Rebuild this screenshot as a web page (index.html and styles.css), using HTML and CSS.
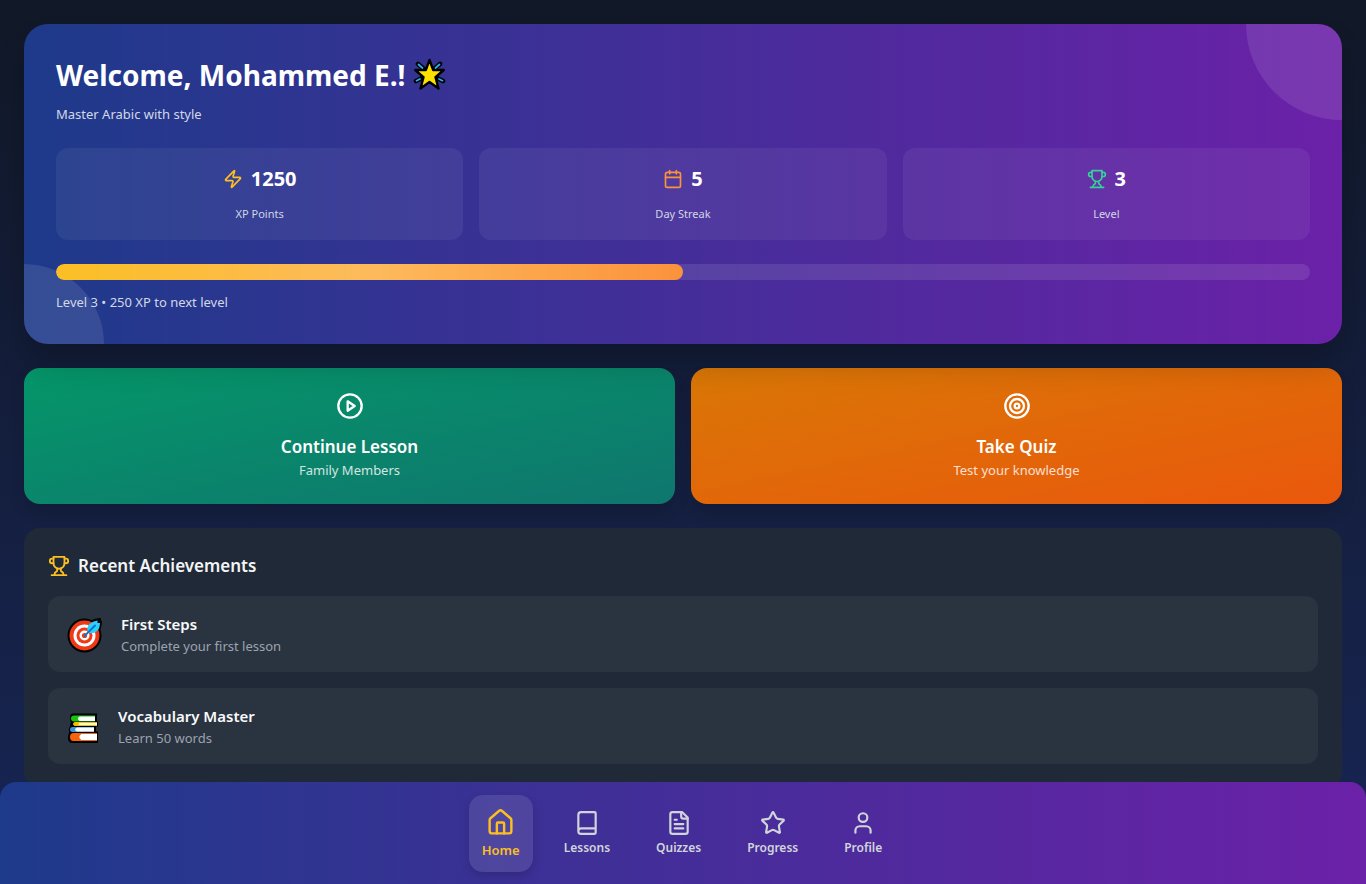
FILE: index.html
```html
<!DOCTYPE html>
<html lang="en">
<head>
<meta charset="utf-8">
<meta name="viewport" content="width=device-width, initial-scale=1">
<title>Arabic Learning</title>
<link rel="stylesheet" href="styles.css">
</head>
<body>
<svg class="sprite" aria-hidden="true">
  <symbol id="trophy" viewBox="0 0 24 24"><path d="M6 9H4.500a2.500 2.500 0 0 1 0-5H6"/><path d="M18 9h1.500a2.500 2.500 0 0 0 0-5H18"/><path d="M4 22h16"/><path d="M10 14.660V17c0 .55-.47.98-.97 1.210C7.850 18.750 7 20.240 7 22"/><path d="M14 14.660V17c0 .55.47.98.97 1.210C16.150 18.750 17 20.240 17 22"/><path d="M18 2H6v7a6 6 0 0 0 12 0V2Z"/></symbol>
</svg>
<main class="page">
  <section class="hero">
    <div class="hero-body">
      <h1 class="hero-title">Welcome, Mohammed E.!
        <svg class="hero-star" viewBox="0 0 34 34" role="img" aria-label="Glowing star">
          <path d="M5 6l6 5M27 6l-6 5M3 23l6-3M30 23l-6-3" stroke="#000" stroke-width="4.600" stroke-linecap="round"/>
          <path d="M16.500 2l3.700 10h10.600l-8.300 7.200 3 11.300-9-6.500-9 6.500 3-11.300L2.200 12h10.600z" fill="#ffe100" stroke="#000" stroke-width="2.400" stroke-linejoin="round"/>
          <path d="M5.500 6.500l4 3.500M26.500 6.500l-4 3.500M3.500 22.700l3.500-1.700M29.500 22.700L26 21" stroke="#22b8ee" stroke-width="1.700" stroke-linecap="round"/>
        </svg>
      </h1>
      <p class="hero-subtitle">Master Arabic with style</p>
      <div class="stats">
        <div class="stat">
          <div class="stat-value"><svg class="icon icon-sm amber" viewBox="0 0 24 24"><path d="M4 14a1 1 0 0 1-.78-1.630l9.900-10.200a.5.5 0 0 1 .86.46l-1.920 6.020A1 1 0 0 0 13 10h7a1 1 0 0 1 .78 1.630l-9.900 10.200a.5.5 0 0 1-.86-.46l1.920-6.020A1 1 0 0 0 11 14z"/></svg><span>1250</span></div>
          <div class="stat-label">XP Points</div>
        </div>
        <div class="stat">
          <div class="stat-value"><svg class="icon icon-sm orange" viewBox="0 0 24 24"><path d="M8 2v4M16 2v4M3 10h18"/><rect width="18" height="18" x="3" y="4" rx="2"/></svg><span>5</span></div>
          <div class="stat-label">Day Streak</div>
        </div>
        <div class="stat">
          <div class="stat-value"><svg class="icon icon-sm green"><use href="#trophy"/></svg><span>3</span></div>
          <div class="stat-label">Level</div>
        </div>
      </div>
      <div class="progress" role="progressbar" aria-label="Level progress" aria-valuenow="50" aria-valuemin="0" aria-valuemax="100"><div class="progress-fill" style="width:50%"></div></div>
      <p class="hero-note">Level 3 • 250 XP to next level</p>
    </div>
  </section>

  <section class="actions">
    <button class="action action-lesson" type="button">
      <svg class="icon icon-lg" viewBox="0 0 24 24"><circle cx="12" cy="12" r="10"/><path d="M10 8l6 4-6 4z"/></svg>
      <span class="action-title">Continue Lesson</span>
      <span class="action-text">Family Members</span>
    </button>
    <button class="action action-quiz" type="button">
      <svg class="icon icon-lg" viewBox="0 0 24 24"><circle cx="12" cy="12" r="10"/><circle cx="12" cy="12" r="6"/><circle cx="12" cy="12" r="2"/></svg>
      <span class="action-title">Take Quiz</span>
      <span class="action-text">Test your knowledge</span>
    </button>
  </section>

  <section class="panel">
    <h2 class="panel-title"><svg class="icon icon-md amber"><use href="#trophy"/></svg>Recent Achievements</h2>
    <ul class="achievements">
      <li class="achievement">
        <svg class="badge-target" viewBox="0 0 41 44" role="img" aria-label="Target">
          <circle cx="20.500" cy="23.500" r="17" fill="#000"/><path d="M26 13l4-5 6-1v2l1 1-1 6-5 5h-5z" fill="#000" stroke="#000" stroke-width="2" stroke-linejoin="round"/>
          <circle cx="20.500" cy="23.500" r="15" fill="#f03a17"/><circle cx="20.500" cy="23.500" r="11" fill="#fff"/><circle cx="20.500" cy="23.500" r="8" fill="#f03a17"/><circle cx="20.500" cy="23.500" r="5" fill="#fff"/><circle cx="20.500" cy="23.500" r="2.600" fill="#f03a17"/>
          <path d="M23.500 19q-1-4 2-7t8-3.500V11h2.500q0 5-3 8t-8 2z" fill="#2bd0fb"/><path d="M20.500 24L31 13.500" stroke="#0a75d0" stroke-width="1.800" stroke-linecap="round"/>
        </svg>
        <div><h3 class="achievement-title">First Steps</h3><p class="achievement-text">Complete your first lesson</p></div>
      </li>
      <li class="achievement">
        <svg class="badge-books" viewBox="0 0 38 44" role="img" aria-label="Books">
          <path d="M9 9.500h24v8h1v5h-2v5h2v11.500H8q-4 0-4-5 0-3 1-5-1-4 1-7 0-2 1-4-1-1-1-4 0-4.500 3-4.500z" fill="#000"/>
          <path d="M31 11.500H10q-3 0-3 3t3 3h21z" fill="#16c60c"/><path d="M31 12.500H15.500q-3 2 0 4.500H31z" fill="#fff"/>
          <path d="M33 18H10.500q-3 2 0 4H33z" fill="#ffb900"/><path d="M33 19H15.500q-2 1 0 2H33z" fill="#fff"/>
          <path d="M30 23H8.500Q6 23 6 25.500T8.500 28H30z" fill="#3595de"/><path d="M30 23.500H13q-4 2 0 4h17z" fill="#fff"/>
          <path d="M33 29H9.500Q6 29 6 33t3.500 4H33z" fill="#f7630c"/><path d="M33 30H17.500q-4.500 3 0 6H33z" fill="#fff"/>
        </svg>
        <div><h3 class="achievement-title">Vocabulary Master</h3><p class="achievement-text">Learn 50 words</p></div>
      </li>
    </ul>
  </section>
</main>

<nav class="tabs" aria-label="Main">
  <a class="tab tab-active" href="#home" aria-current="page"><svg class="icon tab-icon" viewBox="0 0 24 24"><path d="M15 21v-8a1 1 0 0 0-1-1h-4a1 1 0 0 0-1 1v8"/><path d="M3 10a2 2 0 0 1 .709-1.528l7-5.999a2 2 0 0 1 2.582 0l7 5.999A2 2 0 0 1 21 10v9a2 2 0 0 1-2 2H5a2 2 0 0 1-2-2z"/></svg>Home</a>
  <a class="tab" href="#lessons"><svg class="icon tab-icon" viewBox="0 0 24 24"><path d="M4 19.500v-15A2.500 2.500 0 0 1 6.500 2H19a1 1 0 0 1 1 1v18a1 1 0 0 1-1 1H6.500a1 1 0 0 1 0-5H20"/></svg>Lessons</a>
  <a class="tab" href="#quizzes"><svg class="icon tab-icon" viewBox="0 0 24 24"><path d="M15 2H6a2 2 0 0 0-2 2v16a2 2 0 0 0 2 2h12a2 2 0 0 0 2-2V7z"/><path d="M14 2v4a2 2 0 0 0 2 2h4M10 9H8M16 13H8M16 17H8"/></svg>Quizzes</a>
  <a class="tab" href="#progress"><svg class="icon tab-icon" viewBox="0 0 24 24"><path d="M11.525 2.295a.53.53 0 0 1 .95 0l2.310 4.679a2.123 2.123 0 0 0 1.595 1.160l5.166.756a.53.53 0 0 1 .294.904l-3.736 3.638a2.123 2.123 0 0 0-.611 1.878l.882 5.140a.53.53 0 0 1-.771.560l-4.618-2.428a2.122 2.122 0 0 0-1.973 0L6.396 21.010a.53.53 0 0 1-.770-.560l.881-5.139a2.122 2.122 0 0 0-.611-1.879L2.160 9.795a.53.53 0 0 1 .294-.906l5.165-.755a2.122 2.122 0 0 0 1.597-1.160z"/></svg>Progress</a>
  <a class="tab" href="#profile"><svg class="icon tab-icon" viewBox="0 0 24 24"><path d="M19 21v-2a4 4 0 0 0-4-4H9a4 4 0 0 0-4 4v2"/><circle cx="12" cy="7" r="4"/></svg>Profile</a>
</nav>
</body>
</html>
```
FILE: styles.css
```css
* { box-sizing: border-box; margin: 0; padding: 0; }
body {
  min-height: 100vh;
  background: linear-gradient(to bottom, #111827, #172554) fixed;
  color: #fff;
  font-family: "Segoe UI", "Noto Sans", sans-serif;
  font-size: 13px;
  line-height: 20px;
}
.sprite { display: none; }
.icon { flex: none; fill: none; stroke: currentColor; stroke-width: 2; stroke-linecap: round; stroke-linejoin: round; }
.icon-sm { width: 20px; height: 20px; }
.icon-md { width: 22px; height: 22px; }
.icon-lg { width: 28px; height: 28px; margin-bottom: 14px; }
.amber { color: #fbbf24; }
.orange { color: #fb923c; }
.green { color: #34d399; }

.page { display: flex; flex-direction: column; gap: 24px; padding: 24px 24px 96px; }

.hero {
  position: relative;
  overflow: hidden;
  padding: 32px;
  border-radius: 24px;
  background: linear-gradient(to right, #1e3a8a, #6b21a8);
  box-shadow: 0 20px 30px rgba(0, 0, 0, .2);
}
.hero::before, .hero::after { content: ""; position: absolute; border-radius: 50%; background: rgba(255, 255, 255, .1); }
.hero::before { top: -96px; right: -96px; width: 192px; height: 192px; }
.hero::after { bottom: -80px; left: -80px; width: 160px; height: 160px; }
.hero-body { position: relative; z-index: 1; }
.hero-title { display: flex; align-items: center; gap: 8px; margin-bottom: 10px; font-size: 28px; font-weight: 700; line-height: 38px; }
.hero-star { width: 34px; height: 34px; }
.hero-subtitle { color: #d2d8e8; }
.stats { display: grid; grid-template-columns: repeat(3, 1fr); gap: 16px; margin: 24px 0; }
.stat { padding: 16px; border-radius: 12px; background: rgba(255, 255, 255, .06); text-align: center; }
.stat-value { display: flex; align-items: center; justify-content: center; gap: 8px; margin-bottom: 10px; font-size: 20px; font-weight: 700; line-height: 30px; }
.stat-label { color: #d1d5e5; font-size: 11px; }
.progress { height: 16px; margin-bottom: 12px; overflow: hidden; border-radius: 8px; background: rgba(255, 255, 255, .1); }
.progress-fill { height: 100%; border-radius: 8px; background: linear-gradient(to right, #fbbf24, #fdba5c, #fb923c); }
.hero-note { color: #d2d8e8; }

.actions { display: grid; grid-template-columns: 1fr 1fr; gap: 16px; }
.action {
  display: flex;
  flex-direction: column;
  align-items: center;
  padding: 24px;
  border: 0;
  border-radius: 16px;
  box-shadow: 0 10px 15px rgba(0, 0, 0, .12);
  color: #fff;
  font: inherit;
  cursor: pointer;
}
.action-lesson { background: linear-gradient(to bottom right, #059669, #0f766e); }
.action-quiz { background: linear-gradient(to bottom right, #d97706, #ea580c); }
.action-title { font-size: 17px; font-weight: 600; line-height: 26px; }
.action-text { opacity: .8; }

.panel { padding: 24px; border-radius: 16px; background: #1f2937; }
.panel-title { display: flex; align-items: center; gap: 8px; margin-bottom: 16px; color: #f3f4f6; font-size: 17px; font-weight: 600; line-height: 28px; }
.achievements { display: flex; flex-direction: column; gap: 16px; list-style: none; }
.achievement { display: flex; align-items: center; gap: 16px; padding: 16px; border-radius: 12px; background: #2a3441; }
.badge-target { width: 41px; height: 44px; }
.badge-books { width: 38px; height: 44px; }
.achievement-title { color: #f9fafb; font-size: 15px; font-weight: 600; line-height: 24px; }
.achievement-text { color: #9ca3af; }

.tabs {
  position: fixed;
  right: 0;
  bottom: 0;
  left: 0;
  z-index: 2;
  display: flex;
  align-items: center;
  justify-content: center;
  gap: 22px;
  padding: 16px;
  border-radius: 16px 16px 0 0;
  background: linear-gradient(to right, #1e3a8a, #6b21a8);
}
.tab {
  display: flex;
  flex-direction: column;
  align-items: center;
  gap: 4px;
  padding: 12px;
  border-radius: 12px;
  color: #d1d5db;
  font-size: 12px;
  font-weight: 600;
  line-height: 16px;
  text-decoration: none;
}
.tab-icon { width: 26px; height: 26px; }
.tab-active {
  margin: -4px -3px;
  padding: 13px;
  border-radius: 14px;
  background: rgba(255, 255, 255, .1);
  box-shadow: 0 4px 8px rgba(0, 0, 0, .15);
  color: #fbbf24;
  font-size: 13px;
  line-height: 18px;
}
.tab-active .tab-icon { width: 29px; height: 29px; }
```
